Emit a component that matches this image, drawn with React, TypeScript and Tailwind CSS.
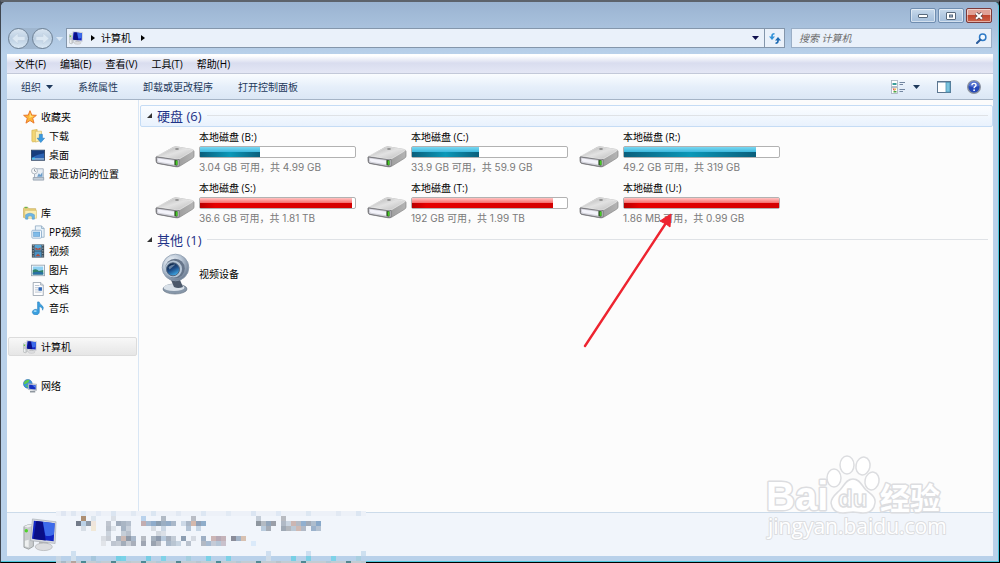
import type { ReactNode } from "react";

type IconProps = { size?: number };

function ComputerIcon({ size = 16 }: IconProps) {
  return (
    <svg width={size} height={size} viewBox="0 0 36 36" aria-hidden="true">
      <path d="M1 9l5-2 5 1v22l-5 3-5-2z" fill="#c9ccce" stroke="#8d9294" strokeWidth="0.8" />
      <path d="M1 9l5-2 5 1-6 2z" fill="#eceeee" />
      <path d="M2 24l4-1v8l-4-1z" fill="#eef0f0" />
      <circle cx="3.500" cy="13.500" r="1.800" fill="#4fd32a" />
      <path d="M17 24h9l1 5H17z" fill="#b4b6b8" />
      <ellipse cx="22" cy="30.500" rx="9" ry="4" fill="#dcdddf" stroke="#b3b5b7" strokeWidth="0.8" />
      <path d="M10 1l25 3-1 23-26-3z" fill="#d6d9de" stroke="#9ea3aa" strokeWidth="0.6" />
      <path d="M11.500 3l22 2.500-1 19-23-2.500z" fill="#1226c4" />
      <path d="M14 3.300l7 .8 3 19.600-13-1.500z" fill="#0a0f86" />
      <path d="M21 4.100l12.500 1.400-.8 12c-4 2-7 2-9 1z" fill="#3d6bea" />
    </svg>
  );
}

function StarIcon() {
  return (
    <svg width="14" height="14" viewBox="0 0 16 16" aria-hidden="true">
      <path d="M8 .8l2 5 5.300.3-4.200 3.400 1.500 5.500L8 12l-4.600 3 1.500-5.500L.7 6.100 6 5.800z" fill="#fcb536" stroke="#e8762c" strokeWidth="1.100" strokeLinejoin="round" />
      <path d="M8 3l1.300 3.600 3 .3-5 2.100z" fill="#ffe27a" />
    </svg>
  );
}

function DownloadsIcon() {
  return (
    <svg width="14" height="14" viewBox="0 0 16 16" aria-hidden="true">
      <path d="M1 1.500l6-1V14l-5 .8L1 14z" fill="#f2d675" stroke="#cfac47" strokeWidth="0.7" />
      <path d="M5 2.500h7V13l-7 2z" fill="#fbeeb4" stroke="#d3b45a" strokeWidth="0.7" />
      <path d="M9.500 6h3.500v4.500h2.500L11.200 15.500 7 10.500h2.500z" fill="#3b9be0" stroke="#2274b8" strokeWidth="0.6" />
    </svg>
  );
}

function DesktopIcon() {
  return (
    <svg width="14" height="14" viewBox="0 0 16 16" aria-hidden="true">
      <rect x="0.500" y="2.500" width="15" height="11.500" fill="#2c64b4" stroke="#33455e" />
      <path d="M1 3h14v3C10 7 6 8 1 11z" fill="#173d7d" />
      <path d="M1 11.500h14v2H1z" fill="#86a9cf" />
      <rect x="1.500" y="11" width="3" height="2" fill="#48c3ee" />
    </svg>
  );
}

function RecentIcon() {
  return (
    <svg width="14" height="14" viewBox="0 0 16 16" aria-hidden="true">
      <path d="M5 2h9v12H4V5z" fill="#e8eef4" stroke="#94a2b2" strokeWidth="0.9" />
      <path d="M2.500 12h12v3h-12z" fill="#c4cfda" stroke="#8b98a6" strokeWidth="0.8" />
      <circle cx="4" cy="4.500" r="3.400" fill="#f5f7f9" stroke="#a2abb5" strokeWidth="0.9" />
      <path d="M4 2.500v2l1.600.8" fill="none" stroke="#66717d" strokeWidth="0.8" />
      <path d="M7 11l2-4 1.500 2L13 6v5z" fill="#6a9cc9" />
    </svg>
  );
}

function LibraryIcon() {
  return (
    <svg width="14" height="14" viewBox="0 0 16 16" aria-hidden="true">
      <path d="M.5 3l1-1.500h4l1 1.500h8v10h-14z" fill="#e8cf7a" stroke="#c3a650" strokeWidth="0.7" />
      <path d="M2 5h13.500v9H2z" fill="#faedb5" stroke="#d2b968" strokeWidth="0.6" />
      <path d="M3 15V10q5-3.500 10 0v5h-2.500v-3q-2.500-1.500-5 0v3z" fill="#6cb6e6" stroke="#4a92c8" strokeWidth="0.6" />
      <rect x="2" y="1" width="3" height="1.500" fill="#63b552" />
    </svg>
  );
}

function PPVideoIcon() {
  return (
    <svg width="14" height="14" viewBox="0 0 16 16" aria-hidden="true">
      <path d="M5 1h7l3 3v10H5z" fill="#eaf3fa" stroke="#8ea9c2" strokeWidth="0.9" />
      <path d="M12 1v3h3" fill="none" stroke="#8ea9c2" strokeWidth="0.9" />
      <rect x="1" y="6" width="11" height="9" rx="1" fill="#f5fafe" stroke="#7fa3c4" strokeWidth="0.9" />
      <rect x="3" y="8" width="7" height="5" fill="#7fbbe8" stroke="#4d8fc6" strokeWidth="0.6" />
    </svg>
  );
}

function VideoIcon() {
  return (
    <svg width="14" height="14" viewBox="0 0 16 16" aria-hidden="true">
      <rect x="1" y="0.500" width="14" height="15" fill="#3d4a55" />
      <rect x="4" y="1" width="8" height="6.500" fill="#58a6d6" />
      <rect x="4" y="8.500" width="8" height="6.500" fill="#4b92c4" />
      <path d="M5 4l3 1.500L11 4v2.500H5zM5 14l3-3 3 3z" fill="#b04a38" />
      <path d="M2.500 1v14M13.500 1v14" stroke="#b9c4cb" strokeWidth="1" strokeDasharray="1.500 1.500" />
    </svg>
  );
}

function PictureIcon() {
  return (
    <svg width="14" height="14" viewBox="0 0 16 16" aria-hidden="true">
      <rect x="0.500" y="2.500" width="15" height="12" fill="#fff" stroke="#93a2b0" />
      <rect x="2" y="4" width="12" height="9" fill="#8fd0f2" />
      <path d="M2 8q4-2 7 1l5-1v5H2z" fill="#2f8268" />
      <path d="M2 11q6-2 12 0v2H2z" fill="#2a6fa6" />
    </svg>
  );
}

function DocumentIcon() {
  return (
    <svg width="14" height="14" viewBox="0 0 16 16" aria-hidden="true">
      <path d="M2.500.5h8.500l3 3v12H2.500z" fill="#fdfdfe" stroke="#8c98a5" strokeWidth="0.9" />
      <path d="M11 .5v3h3" fill="#dfe5ea" stroke="#8c98a5" strokeWidth="0.8" />
      <path d="M4.500 4h5M4.500 6.500h3.500M4.500 9h3.500M4.500 11.500h7.500" stroke="#a9b6c4" strokeWidth="0.9" />
      <rect x="8.500" y="6" width="4" height="4" fill="#2e66b4" />
    </svg>
  );
}

function MusicIcon() {
  return (
    <svg width="14" height="14" viewBox="0 0 16 16" aria-hidden="true">
      <path d="M7.500 1h1.800q.5 2.500 3.200 4 2.700 2 .8 5.500.3-3.500-3.800-4.300v6.300a4 3.200 0 1 1-2-2.600z" fill="#3a9fdf" stroke="#2179b8" strokeWidth="0.6" />
      <ellipse cx="4.800" cy="11.500" rx="1.800" ry="1" fill="#a5dcf8" />
    </svg>
  );
}

function NetworkIcon() {
  return (
    <svg width="14" height="14" viewBox="0 0 16 16" aria-hidden="true">
      <circle cx="5.500" cy="5.500" r="5" fill="#3a93dc" stroke="#2566a8" strokeWidth="0.6" />
      <path d="M2 2.500q3-2.500 5.500-1.500L6 4 3.500 5.500 1 6q0-2 1-3.500zM3 7l3 .5L5 10z" fill="#5fcb4b" />
      <path d="M6 5l9.500 1v7L6 12z" fill="#d5dae0" stroke="#8a929c" strokeWidth="0.6" />
      <path d="M7 6.200l7.500.8v5L7 11z" fill="#1430c0" />
      <path d="M10.500 7l4 .4v3z" fill="#5684f0" />
      <path d="M8 14.500h6" stroke="#8f979f" strokeWidth="1.800" />
    </svg>
  );
}

function DriveIcon() {
  return (
    <svg className="mt-[15px] shrink-0" width="40" height="24" viewBox="0 0 40 24" aria-hidden="true">
      <defs>
        <linearGradient id="driveTop" x1="0" y1="0" x2="1" y2="1">
          <stop offset="0" stopColor="#a9a9a9" />
          <stop offset="0.500" stopColor="#e2e2e2" />
          <stop offset="1" stopColor="#b9b9b9" />
        </linearGradient>
        <linearGradient id="driveSide" x1="0" y1="0" x2="1" y2="0">
          <stop offset="0" stopColor="#7b7b7b" />
          <stop offset="1" stopColor="#b5b5b5" />
        </linearGradient>
      </defs>
      <path d="M1 12L18 2.500q2-1 4-.6L37 4.500q2 .5 2 2V11q0 1.500-1.500 2.300L25 21q-2 1.200-4 .8L3 18.500q-2-.5-2-2.500z" fill="url(#driveSide)" stroke="#858585" strokeWidth="0.7" />
      <path d="M1.500 11L18 2.500q2-1 4-.6L37.500 4.500q1.500.5 0 1.500L25 13.500q-2 1-4 .7z" fill="url(#driveTop)" stroke="#f2f2f2" strokeWidth="0.6" />
      <path d="M1.300 12L22 14.800q1.500 0 2-.5V21q-1 .8-3 .5L3 18.300q-1.500-.3-1.500-1.800z" fill="#d2d2da" stroke="#6f6f74" strokeWidth="0.8" />
      <path d="M3 13.500l16 2.200v3.500L4 16.800q-1-.2-1-1.300z" fill="#f3f3fa" />
      <path d="M19.500 15l3 .3v5.500l-3-.5z" fill="#2b4a22" />
      <path d="M20.700 15.500l1.800.2v4.300l-1.800-.3z" fill="#44cc22" />
      <ellipse cx="22" cy="4" rx="2" ry="0.800" fill="#777" />
    </svg>
  );
}

function WebcamIcon() {
  return (
    <svg className="shrink-0" width="40" height="42" viewBox="0 0 40 42" aria-hidden="true">
      <defs>
        <radialGradient id="camBody" cx="0.350" cy="0.300" r="0.750">
          <stop offset="0" stopColor="#f1f5f9" />
          <stop offset="0.500" stopColor="#b9c6d5" />
          <stop offset="1" stopColor="#697a90" />
        </radialGradient>
        <linearGradient id="camLens" x1="0.200" y1="0" x2="0.700" y2="1">
          <stop offset="0" stopColor="#0c1e3a" />
          <stop offset="0.500" stopColor="#1d4b86" />
          <stop offset="1" stopColor="#43b2ef" />
        </linearGradient>
      </defs>
      <ellipse cx="20" cy="36" rx="12" ry="5" fill="#8797a9" stroke="#6b7888" strokeWidth="0.700" />
      <ellipse cx="19" cy="34.500" rx="10.500" ry="3.600" fill="#d9e1e9" />
      <path d="M16 27h9l3 7q-5 2-9 0z" fill="#4b586a" />
      <circle cx="20.500" cy="14.500" r="13.300" fill="url(#camBody)" stroke="#8b9bad" strokeWidth="0.800" />
      <circle cx="20" cy="15.500" r="9.800" fill="#66758a" />
      <circle cx="18.500" cy="16" r="8.600" fill="#b6c5d5" />
      <circle cx="18" cy="16.300" r="6.500" fill="url(#camLens)" stroke="#51657e" strokeWidth="1" />
      <path d="M13.500 14q3-3 7-2.500l-6 5z" fill="#8aa1bb" opacity="0.700" />
    </svg>
  );
}

function Caret({ className = "" }: { className?: string }) {
  return (
    <svg className={className} width="7" height="4" viewBox="0 0 7 4" aria-hidden="true">
      <path d="M0 0h7L3.500 4z" fill="currentColor" />
    </svg>
  );
}

function CrumbArrow() {
  return (
    <svg width="4" height="6" viewBox="0 0 4 6" aria-hidden="true">
      <path d="M0 0l4 3-4 3z" fill="#000" />
    </svg>
  );
}

function TitleBar() {
  const base = "flex h-[15px] w-[26px] items-center justify-center rounded-[2px] border shadow-[inset_0_0_0_1px_rgba(255,255,255,0.5)]";
  const plain = "border-[#6f8db0] bg-linear-to-b from-[#c9daec] via-[#b4cae2] to-[#a5bfdb]";
  return (
    <header className="flex h-[26px] items-start justify-end gap-[2px] px-[6px] pt-[6px]">
      <button aria-label="最小化" className={`${base} ${plain}`}>
        <svg width="10" height="4" viewBox="0 0 10 4"><rect x="0.500" y="0.500" width="9" height="3" rx="0.500" fill="#fff" stroke="#58697c" /></svg>
      </button>
      <button aria-label="最大化" className={`${base} ${plain}`}>
        <svg width="10" height="8" viewBox="0 0 10 8">
          <rect x="0.500" y="0.500" width="9" height="7" rx="0.500" fill="#fff" stroke="#58697c" />
          <rect x="3.500" y="3" width="3" height="2" fill="#a9bfd8" stroke="#58697c" />
        </svg>
      </button>
      <button aria-label="关闭" className={`${base} border-[#7c3a3a] bg-linear-to-b from-[#e0a297] from-45% via-[#c0452d] via-50% to-[#cb6148]`}>
        <svg width="10" height="8" viewBox="0 0 10 8">
          <path d="M2 1.300l6 5.400M8 1.300L2 6.700" stroke="#5c4445" strokeWidth="3.400" />
          <path d="M2 1.300l6 5.400M8 1.300L2 6.700" stroke="#fff" strokeWidth="2" />
        </svg>
      </button>
    </header>
  );
}

function NavButton({ label, flip }: { label: string; flip?: boolean }) {
  return (
    <button aria-label={label} className="flex size-[21px] items-center justify-center rounded-full border border-[#6f8296] bg-linear-to-b from-[#d9e5f1] via-[#bccfe2] to-[#dbe9f5]">
      <svg className={flip ? "rotate-180" : ""} width="15" height="13" viewBox="0 0 15 13" aria-hidden="true">
        <path d="M7 1L1 6.500 7 12V8.500h7v-4H7z" fill="#dce8f3" stroke="#c3d3e3" strokeWidth="0.700" />
      </svg>
    </button>
  );
}

function NavigationBar() {
  return (
    <div className="flex h-[26px] items-start pr-[6px] pl-[7px]">
      <div className="flex items-center gap-[3px]">
        <div className="flex gap-[3px] rounded-full bg-[#9fb6cf]">
          <NavButton label="后退" />
          <NavButton label="前进" flip />
        </div>
        <button aria-label="历史记录" className="text-[#dbe8f5]">
          <Caret />
        </button>
      </div>
      <div className="ml-[3px] flex h-5 flex-1 items-center border border-[#8496ab] bg-[#eaf1fa] pl-[2px]">
        <ComputerIcon size={14} />
        <div className="ml-2 flex items-center gap-[6px]">
          <CrumbArrow />
          <button className="text-black">计算机</button>
          <span className="ml-1"><CrumbArrow /></span>
        </div>
        <button aria-label="以前的位置" className="ml-auto px-[5px] text-[#10104e]">
          <Caret />
        </button>
        <button aria-label="刷新" className="flex h-full w-5 items-center justify-center border-l border-[#8496ab]">
          <svg width="12" height="11" viewBox="0 0 12 11" aria-hidden="true">
            <path d="M5.500.8Q3 .8 3 3v1" fill="none" stroke="#3292d8" strokeWidth="1.600" />
            <path d="M0 3.500h6L3 7z" fill="#3292d8" />
            <path d="M6.500 10.200Q9 10.200 9 8V7" fill="none" stroke="#1c69b2" strokeWidth="1.600" />
            <path d="M6 7.500h6L9 4z" fill="#1c69b2" />
          </svg>
        </button>
      </div>
      <form className="ml-[6px] flex h-5 w-[201px] items-center border border-[#9aaec6] bg-[#eaf1fa] pr-1 pl-[7px]">
        <input aria-label="搜索 计算机" placeholder="搜索 计算机" className="min-w-0 flex-1 bg-transparent italic outline-none placeholder:text-[#6d6d6d]" />
        <svg width="11" height="11" viewBox="0 0 11 11" aria-hidden="true">
          <circle cx="6.700" cy="4.300" r="3.200" fill="#f4f9ff" stroke="#2f7ac6" strokeWidth="1.500" />
          <path d="M4.300 6.700L1 10" stroke="#2a5c9c" strokeWidth="2" strokeLinecap="round" />
        </svg>
      </form>
    </div>
  );
}

const menus = ["文件(F)", "编辑(E)", "查看(V)", "工具(T)", "帮助(H)"];
const commands = ["系统属性", "卸载或更改程序", "打开控制面板"];

function MenuBar() {
  return (
    <nav className="flex h-5 items-center gap-[14px] border-t border-b border-t-white border-b-[#c3c9d9] bg-linear-to-b from-white from-5% via-[#d9ddef] via-45% to-[#e4e7f5] pl-2 text-black">
      {menus.map((m) => (
        <button key={m}>{m}</button>
      ))}
    </nav>
  );
}

function Toolbar() {
  return (
    <div className="flex h-[26px] items-center gap-[25px] border-b border-[#a5b4c6] bg-linear-to-b from-[#fafdff] via-[#e6effa] to-[#dbe7f5] pr-3 pl-[14px] text-[#1e395b]">
      <button className="flex items-center gap-[5px]">
        组织
        <Caret />
      </button>
      {commands.map((c) => (
        <button key={c}>{c}</button>
      ))}
      <div className="ml-auto flex items-center">
        <button aria-label="更改视图" className="flex items-center gap-2">
          <svg width="14" height="14" viewBox="0 0 14 14" aria-hidden="true">
            <rect x="0.500" y="0.500" width="6" height="6" fill="#fff" stroke="#a3afbc" strokeWidth="0.800" />
            <rect x="1.500" y="3" width="4" height="2" fill="#3a9d9b" />
            <rect x="0.500" y="7.500" width="6" height="6" fill="#fff" stroke="#a3afbc" strokeWidth="0.800" />
            <path d="M1.500 8.500h2v3z" fill="#d3402f" />
            <path d="M3.500 8.500h2l-1 2z" fill="#e9b62c" />
            <path d="M2.500 11h3v1.500h-3z" fill="#4aa645" />
            <path d="M8.500 2.500h5.500M8.500 4.500h3.500M8.500 9.500h5.500M8.500 11.500h3.500" stroke="#7286a0" />
          </svg>
          <Caret />
        </button>
        <button aria-label="显示预览窗格" className="ml-[17px]">
          <svg width="14" height="12" viewBox="0 0 14 12" aria-hidden="true">
            <rect x="0.500" y="0.500" width="13" height="11" fill="#fff" stroke="#5c7690" />
            <path d="M1 1.500h12" stroke="#a9bccd" />
            <rect x="9" y="1.500" width="4" height="9.500" fill="#7cc4de" stroke="#4b93b4" strokeWidth="0.800" />
          </svg>
        </button>
        <button aria-label="获取帮助" className="ml-4">
          <svg width="14" height="14" viewBox="0 0 14 14" aria-hidden="true">
            <circle cx="7" cy="7" r="6.300" fill="#2448b8" stroke="#8e949d" strokeWidth="1.400" />
            <path d="M1.800 6a5.200 5.200 0 0 1 10.400 0Q7 8 1.800 6z" fill="#6f8ce0" opacity="0.600" />
            <path d="M4.900 5.200Q5 3.400 7 3.400t2.100 1.700Q9.100 6.200 7.800 6.800 7.100 7.200 7.100 8.200" fill="none" stroke="#fff" strokeWidth="1.400" />
            <circle cx="7.100" cy="10.200" r="0.900" fill="#fff" />
          </svg>
        </button>
      </div>
    </div>
  );
}

type Place = { label: string; icon: ReactNode };

const favorites: Place[] = [
  { label: "下载", icon: <DownloadsIcon /> },
  { label: "桌面", icon: <DesktopIcon /> },
  { label: "最近访问的位置", icon: <RecentIcon /> },
];

const libraries: Place[] = [
  { label: "PP视频", icon: <PPVideoIcon /> },
  { label: "视频", icon: <VideoIcon /> },
  { label: "图片", icon: <PictureIcon /> },
  { label: "文档", icon: <DocumentIcon /> },
  { label: "音乐", icon: <MusicIcon /> },
];

function PlaceGroup({ label, icon, items = [], active }: Place & { items?: Place[]; active?: boolean }) {
  return (
    <div>
      <a
        href="#"
        className={`flex h-[19px] items-center gap-1 rounded-[2px] border pl-[14px] ${active ? "border-[#dcdcdc] bg-linear-to-b from-[#f8f8f8] to-[#e6e6e6]" : "border-transparent"}`}
      >
        {icon}
        {label}
      </a>
      {items.map((item) => (
        <a key={item.label} href="#" className="flex h-[19px] items-center gap-1 pl-[23px]">
          {item.icon}
          {item.label}
        </a>
      ))}
    </div>
  );
}

function Sidebar() {
  return (
    <aside className="flex w-[132px] shrink-0 flex-col gap-5 border-r border-[#d9e6f4] pt-[7px] pr-px pl-px text-black">
      <PlaceGroup label="收藏夹" icon={<StarIcon />} items={favorites} />
      <PlaceGroup label="库" icon={<LibraryIcon />} items={libraries} />
      <PlaceGroup label="计算机" icon={<ComputerIcon size={14} />} active />
      <PlaceGroup label="网络" icon={<NetworkIcon />} />
    </aside>
  );
}

const drives = [
  { name: "本地磁盘 (B:)", info: "3.04 GB 可用，共 4.99 GB", used: 39 },
  { name: "本地磁盘 (C:)", info: "33.9 GB 可用，共 59.9 GB", used: 43 },
  { name: "本地磁盘 (R:)", info: "49.2 GB 可用，共 319 GB", used: 85 },
  { name: "本地磁盘 (S:)", info: "36.6 GB 可用，共 1.81 TB", used: 98 },
  { name: "本地磁盘 (T:)", info: "192 GB 可用，共 1.99 TB", used: 91 },
  { name: "本地磁盘 (U:)", info: "1.86 MB 可用，共 0.99 GB", used: 100 },
];

function DriveTile({ name, info, used }: (typeof drives)[number]) {
  const full = used > 90;
  return (
    <li className="flex h-[51px] items-start gap-1 pt-[3px]">
      <DriveIcon />
      <div className="w-[157px]">
        <div className="leading-[14px] text-black">{name}</div>
        <div role="meter" aria-label={name} aria-valuenow={used} className="my-[2px] h-3 rounded-[2px] border border-[#b2b2b2] bg-white">
          <div className="flex h-full flex-col" style={{ width: `${used}%` }}>
            <div className={`h-[5px] bg-linear-to-b ${full ? "from-[#ffc4c4] to-[#f56a6a]" : "from-[#78d8f2] to-[#3bb9de]"}`} />
            <div className={`h-[5px] bg-linear-to-r ${full ? "from-[#b80000] via-[#e60000] via-10% to-[#d40000]" : "from-[#0a5f7c] via-[#0b98b8] to-[#0a5f7c]"}`} />
          </div>
        </div>
        <div className="font-[Inter,'Noto_Sans_CJK_SC',sans-serif] leading-[14px] whitespace-nowrap text-[#7a7a7a]">{info}</div>
      </div>
    </li>
  );
}

function GroupHeader({ title, active }: { title: string; active?: boolean }) {
  return (
    <h2 className={`flex h-[22px] items-center gap-[5px] rounded-[2px] border pr-1 pb-px pl-[6px] text-[13px] text-[#1e3287] ${active ? "border-[#c5dcf5] bg-linear-to-b from-[#fbfdff] to-[#e9f2fd]" : "border-transparent"}`}>
      <svg width="5" height="5" viewBox="0 0 6 6" aria-hidden="true"><path d="M6 0v6H0z" fill="#333" /></svg>
      {title}
      <span className="ml-px h-px flex-1 bg-[#dfe2e6]" />
    </h2>
  );
}

function FileList() {
  return (
    <main className="min-w-0 flex-1 pt-[5px] pl-px">
      <GroupHeader title="硬盘 (6)" active />
      <ul className="grid grid-cols-[repeat(auto-fill,212px)] pl-[15px]">
        {drives.map((d) => (
          <DriveTile key={d.name} {...d} />
        ))}
      </ul>
      <GroupHeader title="其他 (1)" />
      <div className="flex items-center gap-1 pt-[2px] pl-[15px] text-black">
        <WebcamIcon />
        视频设备
      </div>
    </main>
  );
}

// column, row, color on a 5px grid
const mosaic: [number, number, string][] = [
  [1, 0, "#dfe6f2"], [3, 0, "#dfe7f2"], [5, 0, "#dbe7f4"], [8, 0, "#e3eaf5"], [11, 0, "#dbe5f1"], [15, 0, "#e1e9f3"], [19, 0, "#dbe6f2"], [24, 0, "#e2e9f3"], [29, 0, "#dde7f3"], [34, 0, "#e2eaf4"], [39, 0, "#dbe5f2"], [44, 0, "#dfe8f4"], [50, 0, "#dde7f2"], [56, 0, "#e2e9f3"], [60, 0, "#dce6f2"],
  [5, 1, "#ad8f73"], [7, 1, "#dce5ee"], [11, 1, "#dbe0e7"], [17, 1, "#b9d2ec"], [21, 1, "#b1bac5"], [27, 1, "#b9bdc5"], [40, 1, "#c4cdd8"], [45, 1, "#b8bbc1"],
  [4, 2, "#737b89"], [5, 2, "#bcd2e7"], [6, 2, "#8d99a7"], [7, 2, "#efe5dc"], [10, 2, "#bfc5cf"], [12, 2, "#9fabbb"], [13, 2, "#aab6c4"], [14, 2, "#b4bfcd"], [17, 2, "#c3adb0"], [18, 2, "#a4b8cf"], [19, 2, "#8faccb"], [20, 2, "#8a9daf"], [21, 2, "#9baec2"], [22, 2, "#93acc7"], [23, 2, "#aab8c9"], [25, 2, "#cdd9e7"], [26, 2, "#aab7c7"], [27, 2, "#d4b8ac"], [28, 2, "#8fa1b8"], [29, 2, "#8fadca"], [40, 2, "#8e969f"], [41, 2, "#b4bbc3"], [42, 2, "#93a6bb"], [43, 2, "#9b9fa8"], [45, 2, "#b0b9c5"], [46, 2, "#c9d4e0"], [47, 2, "#ccb6b2"], [48, 2, "#b4bac4"], [49, 2, "#91afcf"], [50, 2, "#a1aab7"], [51, 2, "#aebdcd"], [52, 2, "#88a8c9"],
  [5, 3, "#d7dee6"], [7, 3, "#f1e8d7"], [10, 3, "#b9c0ca"], [11, 3, "#dce2e9"], [13, 3, "#a7b5c5"], [14, 3, "#c8d0da"], [19, 3, "#d7dce2"], [21, 3, "#cbd7e4"], [26, 3, "#b3c3d5"], [28, 3, "#c5d5e5"], [41, 3, "#b9cbdd"], [42, 3, "#a5acb6"], [45, 3, "#9fa9b5"], [46, 3, "#b3b7bd"], [47, 3, "#bbc8d5"], [48, 3, "#cfb9b3"], [49, 3, "#b1b9c6"], [51, 3, "#9bb2cc"], [52, 3, "#b3c1d1"],
  [10, 4, "#cbd3dd"], [13, 4, "#c5ced8"], [14, 4, "#b7c0cc"], [20, 4, "#d2d8df"], [21, 4, "#dbe0e7"],
  [9, 5, "#d9dde3"], [10, 5, "#c8cdd5"], [12, 5, "#a9b3c0"], [13, 5, "#cbb9b4"], [14, 5, "#8e99a8"], [15, 5, "#a9b8ca"], [17, 5, "#b6bbc3"], [19, 5, "#a5b1be"], [20, 5, "#8d9aad"], [21, 5, "#b7c9dc"], [22, 5, "#a5afbd"], [23, 5, "#c2cbd6"], [25, 5, "#8d9eb2"], [27, 5, "#d5dae2"], [29, 5, "#9eafc4"], [31, 5, "#ccb5b5"], [32, 5, "#b7a9b5"], [33, 5, "#c5b3b9"], [35, 5, "#8a8c99"], [36, 5, "#a3b3c7"], [37, 5, "#d8c1b1"],
  [9, 6, "#e1e4e9"], [11, 6, "#bec5d0"], [12, 6, "#c5cbd4"], [13, 6, "#a3adba"], [14, 6, "#c8cdd5"], [15, 6, "#a9afbb"], [17, 6, "#9fa6b3"], [19, 6, "#9aa3b0"], [20, 6, "#b5bac3"], [22, 6, "#a9b8c9"], [23, 6, "#b9c5d2"], [24, 6, "#c7d4e1"], [26, 6, "#bac3cf"], [29, 6, "#b2b9c4"], [30, 6, "#a6bad1"], [31, 6, "#c5cbd7"], [32, 6, "#b6c6d7"], [33, 6, "#c9c1cc"], [39, 6, "#dbeafa"],
  [3, 8, "#cfe0f0"], [42, 8, "#cfdff0"], [50, 8, "#cddff1"], [61, 8, "#cee0f0"],
  [0, 9, "#c8d7e6"], [3, 9, "#d1e0ed"], [7, 9, "#a5c6dc"], [12, 9, "#75cfe5"], [13, 9, "#79d2e8"], [18, 9, "#78cde4"], [21, 9, "#80d2e8"], [26, 9, "#a4cedf"], [30, 9, "#7ad1e7"], [34, 9, "#7dd1e6"], [42, 9, "#cfdce9"], [47, 9, "#77cfe5"], [50, 9, "#7ecfe4"], [55, 9, "#7ed2e8"], [60, 9, "#a9cfe0"],
  [1, 10, "#a7b9c5"], [3, 10, "#b4a49d"], [5, 10, "#4a8a93"], [8, 10, "#b5cad8"], [11, 10, "#4e8890"], [14, 10, "#bcc8ce"], [17, 10, "#4b8b95"], [20, 10, "#b1c9d7"], [24, 10, "#548790"], [28, 10, "#b7c5cf"], [32, 10, "#4c8b95"], [36, 10, "#b2c8d5"], [40, 10, "#538a93"], [44, 10, "#b8c2c9"], [49, 10, "#4e8993"], [54, 10, "#b0c7d4"], [58, 10, "#53868e"], [61, 10, "#b9c8d1"],
];

function DetailsPane() {
  return (
    <footer className="flex h-[44px] items-center border-t border-[#ccdbea] bg-[#f1f5fb] pl-4">
      <ComputerIcon size={34} />
    </footer>
  );
}

function Mosaic() {
  return (
    <svg className="pointer-events-none absolute -bottom-px left-[55px]" width="315" height="52" viewBox="0 0 315 52" aria-hidden="true">
      <rect x="0" y="0" width="310" height="5" fill="#edf1f8" />
      <rect x="0" y="50" width="310" height="2" fill="#c3ccd2" />
      {mosaic.map(([col, row, color]) => (
        <rect key={`${col}-${row}`} x={col * 5} y={row * 5} width="5" height="5" fill={color} />
      ))}
    </svg>
  );
}

function Watermark() {
  return (
    <svg className="pointer-events-none absolute right-[50px] bottom-[16px]" width="184" height="94" viewBox="0 0 184 94">
      <g fill="#fff" stroke="#dcdde0" strokeWidth="1.500" strokeLinejoin="round">
        <text x="1" y="58" fontSize="40" fontWeight="700" strokeWidth="3" paintOrder="stroke" className="font-['Liberation_Sans',sans-serif]">Bai</text>
        <ellipse cx="69" cy="26" rx="7" ry="9" />
        <ellipse cx="82" cy="13" rx="7" ry="9" />
        <ellipse cx="98" cy="14" rx="7" ry="9" transform="rotate(12 98 14)" />
        <ellipse cx="107" cy="29" rx="7" ry="9" transform="rotate(12 107 29)" />
        <path d="M88 27c7 0 9 7 13 11 5 4 10 7 9 13-1 8-7 10-12 10-4 0-6-1-10-1s-6 1-10 1c-6 0-11-3-12-10 0-6 5-9 9-13s6-11 13-11z" />
        <text x="73" y="55" fontSize="24" fontWeight="700" className="font-['Liberation_Sans',sans-serif]">du</text>
        <text x="115" y="57" fontSize="30" fontWeight="700" strokeWidth="3" paintOrder="stroke" className="font-['Noto_Sans_CJK_SC',sans-serif]">经验</text>
        <text x="3" y="82" fontSize="21" strokeWidth="2" paintOrder="stroke" className="font-['Open_Sans',sans-serif]">jingyan.baidu.com</text>
      </g>
    </svg>
  );
}

function PointerArrow() {
  return (
    <svg className="pointer-events-none absolute top-[208px] left-[579px]" width="96" height="140" viewBox="0 0 96 140" aria-hidden="true">
      <path d="M5 136L86 13" stroke="#ee2430" strokeWidth="2.400" strokeLinecap="round" />
      <path d="M91 4L90 17 86 14 80 11z" fill="#ee2430" stroke="#ee2430" strokeWidth="1" />
    </svg>
  );
}

export default function App() {
  return (
    <div className="relative flex min-h-screen flex-col border-t-2 border-r border-b border-l border-t-[#5d636c] border-r-black border-b-black border-l-[#3f4650] bg-[#3f4650] font-['Open_Sans','Noto_Sans_CJK_SC',sans-serif] text-[10px] leading-[14px]">
      <div className="flex flex-1 flex-col rounded-t-[5px] border-r border-b border-r-[#4cc7dc] border-b-[#4cc7dc] bg-[#b9d1ea] bg-linear-to-b from-[#9ab3d1] to-[#b9d1ea] to-[52px]">
        <TitleBar />
        <NavigationBar />
        <div className="mr-[5px] mb-[5px] ml-[6px] flex flex-1 flex-col">
          <MenuBar />
          <Toolbar />
          <div className="flex flex-1 bg-[#fcfcfc]">
            <Sidebar />
            <FileList />
          </div>
          <DetailsPane />
        </div>
      </div>
      <PointerArrow />
      <Watermark />
      <Mosaic />
    </div>
  );
}
